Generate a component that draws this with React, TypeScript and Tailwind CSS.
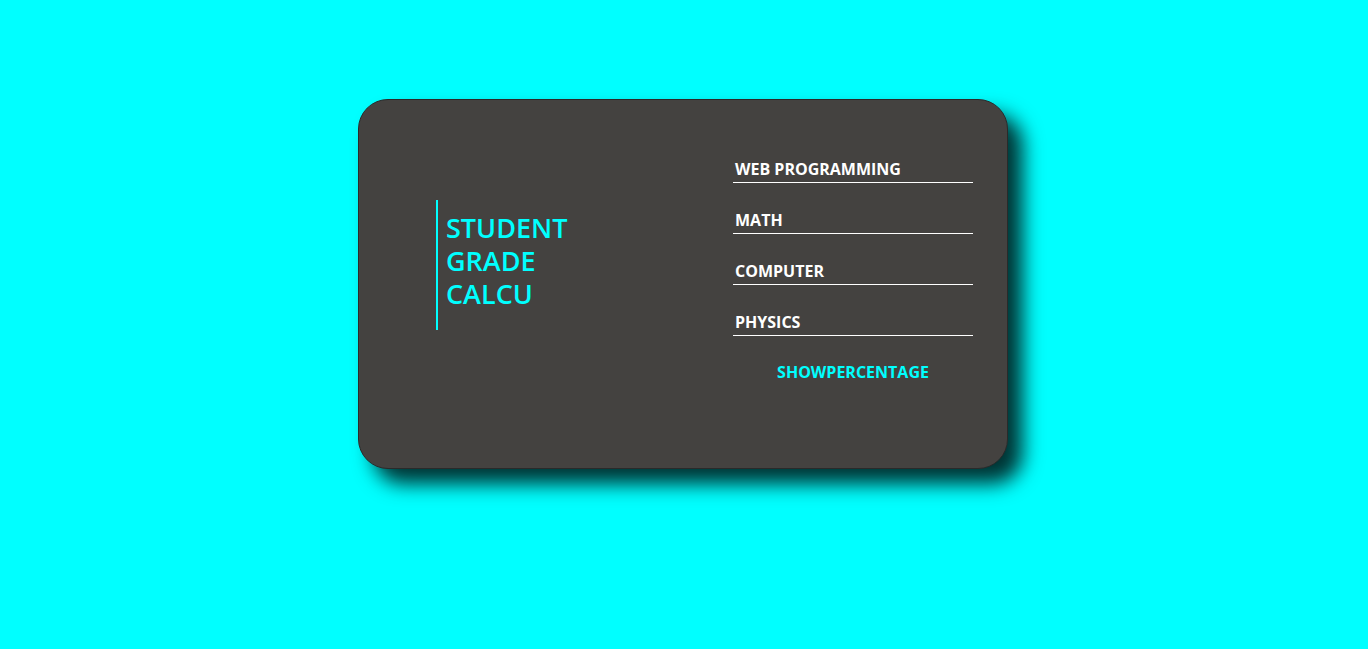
export default function App() {
  const fields = ["WEB PROGRAMMING", "MATH", "COMPUTER", "PHYSICS"];
  return (
    <div
      className="min-h-screen w-full bg-[#00ffff] pt-[99px]"
      style={{ fontFamily: '"Open Sans", "Noto Sans", sans-serif' }}
    >
      <div className="ml-[358px] flex h-[370px] w-[650px] items-start rounded-[30px] border border-[#2a2a2a] bg-[#444240] pl-[77px] shadow-[15px_15px_20px_rgba(0,0,0,0.8)]">
        <div className="mt-[100px] w-[297px]">
          <h1 className="h-[130px] border-l-2 border-[#00ffff] pl-[8px] pt-[11px] text-[27px] font-semibold leading-[33px] text-[#00ffff]">
            STUDENT
            <br />
            GRADE
            <br />
            CALCU
          </h1>
        </div>
        <div className="mt-[59px] flex w-[240px] flex-col">
          {fields.map((f, i) => (
            <div
              key={f}
              className={`border-b border-white pb-[3px] pl-[2px] text-[16px] font-bold leading-[20px] text-white ${i > 0 ? "mt-[27px]" : ""}`}
            >
              {f}
            </div>
          ))}
          <button className="mt-[26px] self-center text-[16px] font-bold leading-[20px] text-[#00ffff]">
            SHOWPERCENTAGE
          </button>
        </div>
      </div>
    </div>
  );
}
